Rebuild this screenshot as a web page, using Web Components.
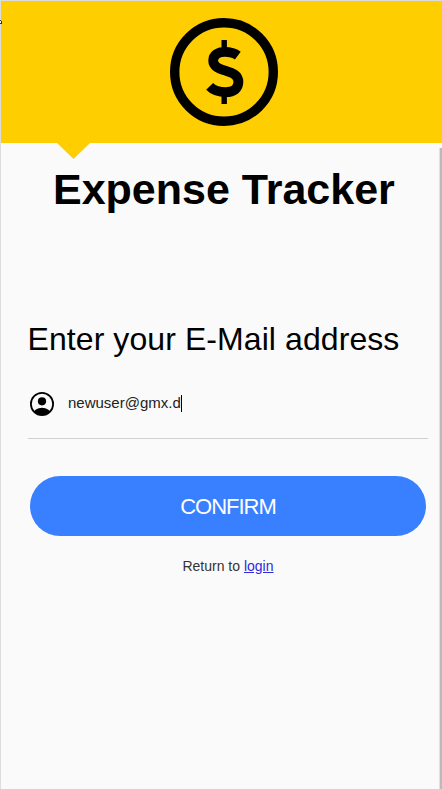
<!DOCTYPE html>
<html lang="en">
<head>
<meta charset="utf-8">
<title>Expense Tracker</title>
<style>
html,body{margin:0;height:100%;overflow:hidden;background:#fafafa;font-family:"Liberation Sans",Arial,sans-serif;color:#000}
</style>
</head>
<body>
<expense-app>
  <app-header slot="header"></app-header>
  <app-title>Expense Tracker</app-title>
  <section-heading>Enter your E-Mail address</section-heading>
  <email-field>newuser@gmx.d</email-field>
  <confirm-button>CONFIRM</confirm-button>
  <return-link label="login">Return to</return-link>
</expense-app>
<script>
const define = (name, html) => customElements.define(name, class extends HTMLElement {
  constructor() {
    super();
    this.attachShadow({ mode: 'open' }).innerHTML = html;
  }
  connectedCallback() {
    const target = this.shadowRoot.querySelector('[data-label]');
    if (target) target.textContent = this.getAttribute('label');
  }
});

define('expense-app', `
<style>
:host{display:flex;flex-direction:column;position:relative;box-sizing:border-box;height:789px;width:442px;border-left:1px solid #dcdcdc;border-top:1px solid #dcdcdc;background:#fafafa}
main{display:flex;flex-direction:column;padding:0 14px 0 27px}
.scroll{position:absolute;right:0;top:147px;bottom:0;width:2px;background:#bababa;border-left:1px solid #e0e0e0}
.edge{position:absolute;left:-1px;top:19px;width:2px;height:4px}
</style>
<slot name="header"></slot>
<main><slot></slot></main>
<div class="scroll"></div>
<svg class="edge" viewBox="0 0 2 4"><path fill="#333" d="M0 0H1V1H2V4H0V3H1V1H0Z"/><path fill="#fff" d="M0 1H1V3H0Z"/></svg>`);

define('app-header', `
<style>
:host{display:flex;position:relative;justify-content:center;height:142px;flex:none;background:#ffce00}
.logo{width:108px;height:108px;margin:17px 0 0 5px}
.notch{position:absolute;left:56px;top:142px;width:33px;height:16px;background:#ffce00;clip-path:polygon(0 0,100% 0,50% 100%)}
</style>
<svg class="logo" viewBox="170 18 108 108" fill="none" stroke="#000">
<circle cx="224" cy="72" r="49.3" stroke-width="9.4"/>
<path stroke-width="9.8" d="M237.8 55.6C234 52.8 229.8 51.9 225 51.9C217.5 51.9 213.2 55.3 213.2 60.6C213.2 66.4 218.3 68.4 225.4 70.6C232.5 72.8 238.4 74.8 238.4 82C238.4 88.6 233.5 92.1 226 92.1C219.2 92.1 213.6 90.4 209.6 86.3"/>
<path stroke-width="5.4" d="M224.2 40V50M224.2 94V104"/>
</svg>
<div class="notch"></div>`);

define('app-title', `
<style>
:host{display:block;height:60px;padding-top:16px}
h1{margin:0;padding-left:25px;font-size:43px;line-height:60px;font-weight:700;white-space:nowrap}
</style><h1><slot></slot></h1>`);

define('section-heading', `
<style>
:host{display:block;margin-top:100px}
h2{margin:0;margin-left:-.5px;font-size:32px;line-height:40px;font-weight:400;letter-spacing:.08px;white-space:nowrap}
</style><h2><slot></slot></h2>`);

define('email-field', `
<style>
:host{display:flex;align-items:center;box-sizing:border-box;height:71px;margin-top:9px;border-bottom:1px solid #cfcfd4;font-size:15px;line-height:18px;color:#222}
svg{width:24px;height:24px;margin:1px 14px 0 2px}
.caret{width:1px;height:17px;background:#000}
</style>
<svg viewBox="0 0 24 24"><defs><clipPath id="c"><circle cx="12" cy="12" r="11"/></clipPath></defs><circle cx="12" cy="12" r="11.1" fill="none" stroke="#000" stroke-width="1.8"/><circle cx="12" cy="9.3" r="4.1"/><ellipse cx="12" cy="21.5" rx="8.6" ry="5.7" clip-path="url(#c)"/></svg>
<span><slot></slot></span><i class="caret"></i>`);

define('confirm-button', `
<style>
:host{display:block;margin:37px 2px 0}
button{display:block;width:100%;height:60px;padding:1px 0 0;border:0;border-radius:30px;background:#3880ff;color:#fff;font:22px "Liberation Sans",Arial,sans-serif;letter-spacing:-1px}
</style><button><slot></slot></button>`);

define('return-link', `
<style>
:host{display:block;margin-top:20px;text-align:center;font-size:14px;line-height:20px;color:#333}
a{color:#3228dc;text-decoration:underline}
</style><slot></slot> <a href="#" data-label></a>`);
</script>
</body>
</html>
